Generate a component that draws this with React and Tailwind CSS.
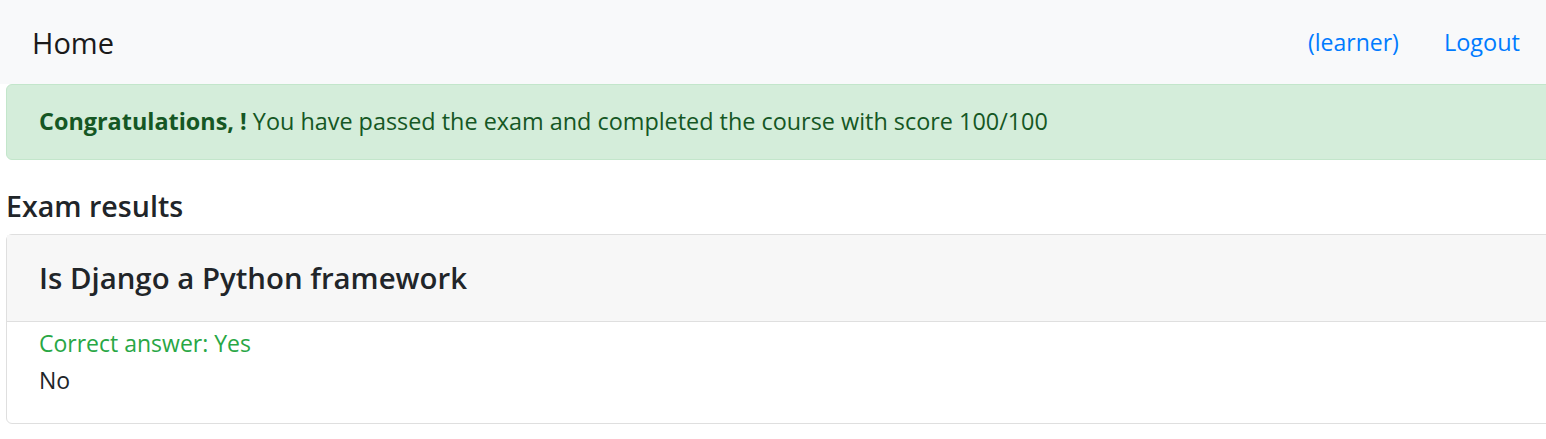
export default function App() {
  return (
    <div
      className="min-h-[439px] w-full overflow-hidden bg-white text-[#212529]"
      style={{ fontFamily: '"Open Sans", "Noto Sans", sans-serif' }}
    >
      {/* navbar */}
      <nav className="flex h-[84px] items-center justify-between bg-[#f8f9fa] pl-[32px] pr-[26px]">
        <a className="text-[29px] leading-[45px] text-[#1a1a1a]">Home</a>
        <div className="flex items-center gap-[45px] text-[23px] leading-[36px] text-[#007bff]">
          <a>(learner)</a>
          <a className="text-[23.5px]">Logout</a>
        </div>
      </nav>

      <div className="pl-[6px]">
        {/* alert */}
        <div className="-mr-[40px] flex h-[76px] items-center rounded-l-[6px] border border-[#c3e6cb] bg-[#d4edda] px-[32px] text-[23.4px] text-[#155724]">
          <p>
            <strong className="font-bold">Congratulations, !</strong> You have
            passed the exam and completed the course with score 100/100
          </p>
        </div>

        <h5 className="mt-[28px] mb-[10px] text-[28.6px] leading-[36px] font-semibold">
          Exam results
        </h5>

        {/* card */}
        <div className="-mr-[40px] rounded-l-[6px] border border-[#dfdfdf]">
          <div className="flex h-[87px] items-center border-b border-[#dfdfdf] bg-[#f7f7f7] px-[32px]">
            <h5 className="text-[29.4px] leading-[36px] font-semibold">
              Is Django a Python framework
            </h5>
          </div>
          <div className="px-[32px] pt-[3px] pb-[24px] text-[23px] leading-[37px]">
            <div className="text-[#28a745]">Correct answer: Yes</div>
            <div>No</div>
          </div>
        </div>
      </div>
    </div>
  );
}
